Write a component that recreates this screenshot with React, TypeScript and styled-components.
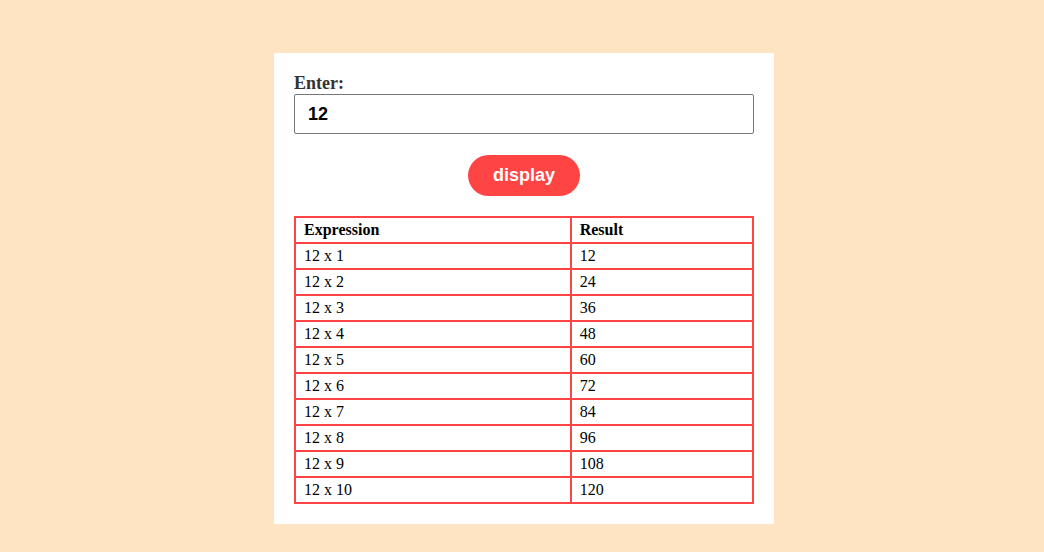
import * as React from "react";
import { useState } from "react";
import styled, { createGlobalStyle } from "styled-components";

const GlobalStyle = createGlobalStyle`
  html, body {
    margin: 0;
    padding: 0;
    background: #ffe4c4;
  }
  body {
    font-family: "Liberation Serif", "Times New Roman", serif;
  }
`;

const Page = styled.main`
  display: flex;
  justify-content: center;
  padding: 53px 0 0 4px;
`;

const Card = styled.section`
  width: 460px;
  padding: 20px;
  background: #ffffff;
  display: flex;
  flex-direction: column;
`;

const Label = styled.label`
  font-size: 18px;
  font-weight: bold;
  line-height: 21px;
  color: #333333;
`;

const Input = styled.input`
  box-sizing: border-box;
  width: 100%;
  height: 40px;
  margin: 0;
  padding: 0 13px;
  border: 1px solid #767676;
  border-radius: 2px;
  font-family: "Liberation Sans", Arial, sans-serif;
  font-size: 18px;
  font-weight: bold;
  color: #000;
  outline: none;
`;

const ButtonRow = styled.div`
  display: flex;
  justify-content: center;
  margin-top: 21px;
`;

const Button = styled.button`
  width: 112px;
  height: 41px;
  border: none;
  border-radius: 21px;
  background: #ff4444;
  color: #ffffff;
  font-family: "Liberation Sans", Arial, sans-serif;
  font-size: 18px;
  font-weight: bold;
  cursor: pointer;
`;

const Table = styled.table`
  margin-top: 20px;
  width: 100%;
  border-collapse: collapse;
  border: 2px solid #ff4444;
  font-size: 16px;
  color: #000;
`;

const Cell = styled.td<{ $head?: boolean; $wide?: boolean }>`
  border: 2px solid #ff4444;
  padding: 3px 8px;
  height: 18px;
  line-height: 18px;
  text-align: left;
  font-weight: ${({ $head }) => ($head ? "bold" : "normal")};
  width: ${({ $wide }) => ($wide ? "60.2%" : "auto")};
`;

export default function App() {
  const [value, setValue] = useState("12");
  const [num, setNum] = useState(12);
  const rows = Array.from({ length: 10 }, (_, i) => i + 1);

  return (
    <>
      <GlobalStyle />
      <Page>
        <Card>
          <Label htmlFor="num">Enter:</Label>
          <Input
            id="num"
            value={value}
            onChange={(e) => setValue(e.target.value)}
          />
          <ButtonRow>
            <Button onClick={() => setNum(Number(value) || 0)}>display</Button>
          </ButtonRow>
          <Table>
            <thead>
              <tr>
                <Cell as="th" $head $wide>
                  Expression
                </Cell>
                <Cell as="th" $head>
                  Result
                </Cell>
              </tr>
            </thead>
            <tbody>
              {rows.map((i) => (
                <tr key={i}>
                  <Cell $wide>
                    {num} x {i}
                  </Cell>
                  <Cell>{num * i}</Cell>
                </tr>
              ))}
            </tbody>
          </Table>
        </Card>
      </Page>
    </>
  );
}
